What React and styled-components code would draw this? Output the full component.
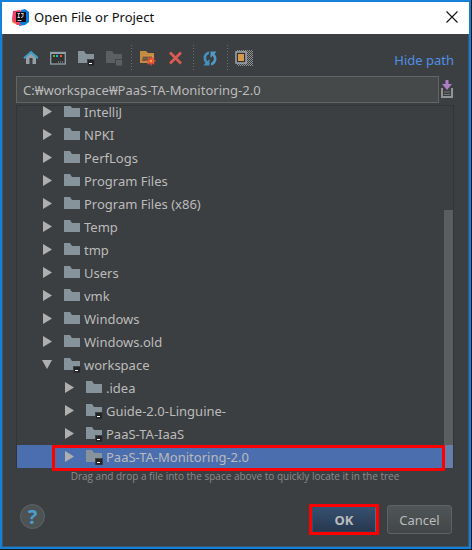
import React from "react";
import styled, { createGlobalStyle, css } from "styled-components";

const GlobalStyle = createGlobalStyle`
  *, *::before, *::after { box-sizing: border-box; }
  body { margin: 0; background: #14161a; }
  button, input { font: inherit; color: inherit; }
  body, button, input { font-family: "Noto Sans", "Noto Sans CJK KR", sans-serif; }
`;

const Dialog = styled.main`
  display: flex;
  flex-direction: column;
  height: calc(100vh - 1px);
  min-height: 320px;
  margin-right: 1px;
  border: 2px solid #1580d8;
  box-shadow: inset 0 0 0 1px #3a5570;
  background: #3c3f41;
  color: #bbbbbb;
  font-size: 13px;
  line-height: 18px;
`;

const TitleBar = styled.header`
  display: flex;
  align-items: center;
  gap: 5px;
  height: 32px;
  flex: none;
  padding: 0 11px 2px 10px;
  background: #ffffff;
  color: #111111;
`;

const Title = styled.h1`
  flex: 1;
  margin: 0;
  font-size: 13px;
  font-weight: 400;
`;

const BareButton = styled.button`
  display: flex;
  align-items: center;
  justify-content: center;
  padding: 0;
  border: 0;
  background: none;
`;

const Body = styled.section`
  display: flex;
  flex-direction: column;
  flex: 1;
  min-height: 0;
  padding: 8px 15px 12px 14px;
`;

const Toolbar = styled.div`
  display: flex;
  align-items: center;
  height: 32px;
  flex: none;
`;

const ToolButton = styled(BareButton)`
  width: 28px;
  height: 28px;
`;

const Separator = styled.span`
  width: 6px;
  height: 26px;
  background: repeating-linear-gradient(#6a6c6e 0 1px, transparent 1px 3px) center / 1px 100% no-repeat;
`;

const HideLink = styled.a`
  margin-left: auto;
  padding-top: 4px;
  color: #4f8fe6;
  text-decoration: none;
`;

const PathRow = styled.div`
  display: flex;
  align-items: center;
  flex: none;
  gap: 1px;
  margin-top: 2px;
`;

const PathInput = styled.input`
  flex: 1;
  min-width: 0;
  height: 27px;
  padding: 0 6px;
  border: 1px solid #646464;
  background: #45494a;
  outline: none;
`;

const TreeArea = styled.div`
  position: relative;
  flex: 1;
  min-height: 0;
  margin-top: 2px;
`;

const Tree = styled.div`
  display: flex;
  flex-direction: column;
  justify-content: flex-end;
  height: 100%;
  overflow: hidden;
  border: solid #323435;
  border-width: 1px 1px 0;
`;

const TreeRow = styled.div`
  display: flex;
  align-items: center;
  flex: none;
  height: 23px;
  padding-left: ${({ $depth }) => 23 + $depth * 22}px;
  ${({ $selected }) => $selected && css`background: #4b6eaf;`}
`;

const Toggle = styled(BareButton)`
  width: 14px;
  height: 20px;
  margin-right: 10px;
`;

const RowName = styled.span`
  margin-left: 3px;
`;

const ScrollThumb = styled.div`
  position: absolute;
  right: 1px;
  bottom: 0;
  width: 9px;
  height: 71%;
  background: rgba(166, 166, 166, 0.3);
`;

const RowHighlight = styled.div`
  position: absolute;
  left: 36px;
  right: 9px;
  bottom: -3px;
  height: 26px;
  border: 3px solid #ff0000;
  pointer-events: none;
`;

const Hint = styled.p`
  flex: none;
  margin: 0 0 19px;
  color: #8c8c8c;
  font-family: "Open Sans", sans-serif;
  font-size: 10px;
  line-height: 17px;
  text-align: center;
`;

const Footer = styled.footer`
  display: flex;
  align-items: center;
  flex: none;
  padding: 0 2px 0 4px;
`;

const HelpButton = styled(BareButton)`
  width: 25px;
  height: 25px;
  margin: 0 auto 6px 0;
  border: 1px solid #5e6365;
  border-radius: 50%;
  background: #4d5254;
  color: #4b9fcf;
  font-size: 20px;
  font-weight: 700;
  line-height: 20px;
`;

const OkHighlight = styled.div`
  margin-right: 8px;
  border: 3px solid #ff0000;
`;

const ActionButton = styled.button`
  display: block;
  width: ${({ $primary }) => ($primary ? 64 : 65)}px;
  height: ${({ $primary }) => ($primary ? 25 : 29)}px;
  padding: 0;
  border: 1px solid #5e6264;
  border-radius: 3px;
  background: linear-gradient(#505658, #424647);
  ${({ $primary }) => $primary && css`
    border-color: #345070 #536a80 #2c3c54 #345070;
    border-radius: 0;
    background: linear-gradient(#365070, #28384f);
    font-weight: 700;
  `}
`;

function Logo() {
  return (
    <svg width="17" height="17" viewBox="0 0 17 17" aria-hidden="true">
      <path d="M0 9l5-3 3 9-3 1-5-3z" fill="#f78b32" />
      <path d="M9 1l4-1 4 3v10l-4 3-6 1z" fill="#087cdb" />
      <path d="M1 2l7-1 3 3-5 6-4 4-2-4z" fill="#f0416c" />
      <path d="M3 13l4-2 2 5-4 0z" fill="#f0416c" />
      <rect x="4" y="3" width="10" height="10" fill="#120d14" />
      <path d="M5.500 4.500h2.500M6.700 4.500v4M5.500 8.500h2.500M9 4.500h2.500M11 4.500v2.500q0 1.500-2 1.500M5.500 11.500h4" stroke="#ddd" strokeWidth=".9" fill="none" />
    </svg>
  );
}

function CloseIcon() {
  return (
    <svg width="12" height="12" viewBox="0 0 12 12" aria-hidden="true">
      <path d="M.5.5l11 11M11.500.5l-11 11" stroke="#111" strokeWidth="1.100" />
    </svg>
  );
}

function HomeIcon() {
  return (
    <svg width="16" height="16" viewBox="0 0 16 16" aria-hidden="true">
      <path d="M4 7l5-4 5 4v7h-3.500V9h-3v5H4z" fill="#94a0a6" />
      <path d="M7.500 8h3v1.500h-3z" fill="#3c3f41" />
      <path d="M2 8.200L9 2l7 6.200" fill="none" stroke="#3ca0c8" strokeWidth="2" />
    </svg>
  );
}

function DesktopIcon() {
  return (
    <svg width="16" height="16" viewBox="0 0 16 16" aria-hidden="true">
      <rect x="0.700" y="2.500" width="14.600" height="11.500" fill="#303334" stroke="#93a0a7" strokeWidth="1.300" />
      <path d="M1 3h14" stroke="#93a0a7" strokeWidth="2" />
      <rect x="3" y="5" width="2" height="2" fill="#50b52b" />
      <rect x="6" y="5" width="2" height="2" fill="#31a8e0" />
      <rect x="10" y="5" width="2" height="2" fill="#f05523" />
      <path d="M8 12h1M10 12h1M12 12h1" stroke="#9da7ab" />
    </svg>
  );
}

function FolderIcon({ badge, muted }) {
  return (
    <svg width="17" height="16" viewBox="0 0 17 16" aria-hidden="true">
      <path d="M0 1h6l2 3h8v9H0z" fill={muted ? "#5c5e5f" : "#87939a"} />
      {badge && <rect x="9.500" y="9.500" width="7" height="6.500" fill={muted ? "#5c5e5f" : "#222426"} stroke="#3c3f41" strokeWidth=".8" />}
      {badge && !muted && <path d="M11 13.500h3" stroke="#fff" />}
    </svg>
  );
}

function NewFolderIcon() {
  return (
    <svg width="18" height="16" viewBox="0 0 18 16" aria-hidden="true">
      <path d="M1 1h6l2 2h6v10H1z" fill="#c58b41" />
      <path d="M4 6h9v5H3z" fill="#3c3f41" opacity=".65" />
      <path d="M4 6h11" stroke="#d99b4c" />
      <path d="M12 6.500v9M7.500 11h9M8.800 7.800l6.400 6.400M15.200 7.800l-6.400 6.400" stroke="#f1513a" strokeWidth="1.300" />
      <circle cx="12" cy="11" r="2.600" fill="#f1513a" />
      <circle cx="12" cy="11" r="1.200" fill="#ffa43a" />
    </svg>
  );
}

function DeleteIcon() {
  return (
    <svg width="16" height="16" viewBox="0 0 16 16" aria-hidden="true">
      <path d="M2 2.500l11 11M13 2.500l-11 11" stroke="#dc5b50" strokeWidth="2.600" />
    </svg>
  );
}

function RefreshIcon() {
  return (
    <svg width="17" height="17" viewBox="0 0 17 17" aria-hidden="true">
      <path d="M7 1.500C2 2.500-.5 8.500 3.500 13L1.500 15.500H7.500V9L5.300 11.200C3 8 4.500 5 7 4z" fill="#438fbd" />
      <path d="M9 15.500C14 14.500 16.500 8.500 12.500 4L14.500 1.500H8.500V8L10.700 5.800C13 9 11.500 12 9 13z" fill="#5099c6" />
    </svg>
  );
}

function HiddenFilesIcon() {
  return (
    <svg width="18" height="16" viewBox="0 0 18 16" aria-hidden="true">
      <defs>
        <pattern id="dots" width="2" height="2" patternUnits="userSpaceOnUse">
          <rect width="1" height="1" fill="#8c8e8f" />
          <rect x="1" y="1" width="1" height="1" fill="#8c8e8f" />
        </pattern>
      </defs>
      <rect x="2" width="16" height="16" fill="url(#dots)" />
      <rect x="1" y="2" width="10" height="11" fill="#303335" stroke="#a3a5ab" strokeWidth="1.500" />
      <rect x="3" y="4" width="6" height="7" fill="#d69948" />
    </svg>
  );
}

function HistoryIcon() {
  return (
    <svg width="14" height="19" viewBox="0 0 14 19" aria-hidden="true">
      <path d="M2 8v9h10V8" fill="none" stroke="#929495" strokeWidth="2" />
      <path d="M4 12h6M4 14.500h6" stroke="#747677" />
      <path d="M5.500 0h3v4H12L7 10 2 4h3.500z" fill="#ad7fc2" />
    </svg>
  );
}

function Arrow({ open }) {
  return (
    <svg width="10" height="12" viewBox="0 0 10 12" aria-hidden="true">
      <path d={open ? "M0 1h10L5 10z" : "M1 0l9 5.500L1 11z"} fill="#afafaf" />
    </svg>
  );
}

const tools = [
  ["Home directory", <HomeIcon />],
  ["Desktop directory", <DesktopIcon />],
  ["Project directory", <FolderIcon badge />],
  ["Module directory", <FolderIcon badge muted />],
  null,
  ["New folder", <NewFolderIcon />],
  ["Delete", <DeleteIcon />],
  null,
  ["Refresh", <RefreshIcon />],
  null,
  ["Show hidden files", <HiddenFilesIcon />],
];

const entries = [
  { name: "IntelliJ" },
  { name: "NPKI" },
  { name: "PerfLogs" },
  { name: "Program Files" },
  { name: "Program Files (x86)" },
  { name: "Temp" },
  { name: "tmp" },
  { name: "Users" },
  { name: "vmk" },
  { name: "Windows" },
  { name: "Windows.old" },
  { name: "workspace", badge: true, open: true },
  { name: ".idea", depth: 1 },
  { name: "Guide-2.0-Linguine-", depth: 1, badge: true },
  { name: "PaaS-TA-IaaS", depth: 1, badge: true },
  { name: "PaaS-TA-Monitoring-2.0", depth: 1, badge: true, selected: true },
];

export default function App() {
  return (
    <>
      <GlobalStyle />
      <Dialog>
        <TitleBar>
          <Logo />
          <Title>Open File or Project</Title>
          <BareButton aria-label="Close"><CloseIcon /></BareButton>
        </TitleBar>
        <Body>
          <Toolbar role="toolbar">
            {tools.map((tool, i) =>
              tool ? (
                <ToolButton key={i} aria-label={tool[0]}>{tool[1]}</ToolButton>
              ) : (
                <Separator key={i} />
              )
            )}
            <HideLink href="#path">Hide path</HideLink>
          </Toolbar>
          <PathRow>
            <PathInput id="path" aria-label="Path" defaultValue="C:₩workspace₩PaaS-TA-Monitoring-2.0" />
            <BareButton aria-label="Path history"><HistoryIcon /></BareButton>
          </PathRow>
          <TreeArea>
            <Tree role="tree" aria-label="Folders">
              {entries.map(({ name, depth = 0, badge, open = false, selected = false }) => (
                <TreeRow key={name} role="treeitem" aria-level={depth + 1} aria-expanded={open} aria-selected={selected} $depth={depth} $selected={selected}>
                  <Toggle aria-label={`Toggle ${name}`}><Arrow open={open} /></Toggle>
                  <FolderIcon badge={badge} />
                  <RowName>{name}</RowName>
                </TreeRow>
              ))}
            </Tree>
            <ScrollThumb />
            <RowHighlight />
          </TreeArea>
          <Hint>Drag and drop a file into the space above to quickly locate it in the tree</Hint>
          <Footer>
            <HelpButton aria-label="Help">?</HelpButton>
            <OkHighlight><ActionButton $primary>OK</ActionButton></OkHighlight>
            <ActionButton>Cancel</ActionButton>
          </Footer>
        </Body>
      </Dialog>
    </>
  );
}
